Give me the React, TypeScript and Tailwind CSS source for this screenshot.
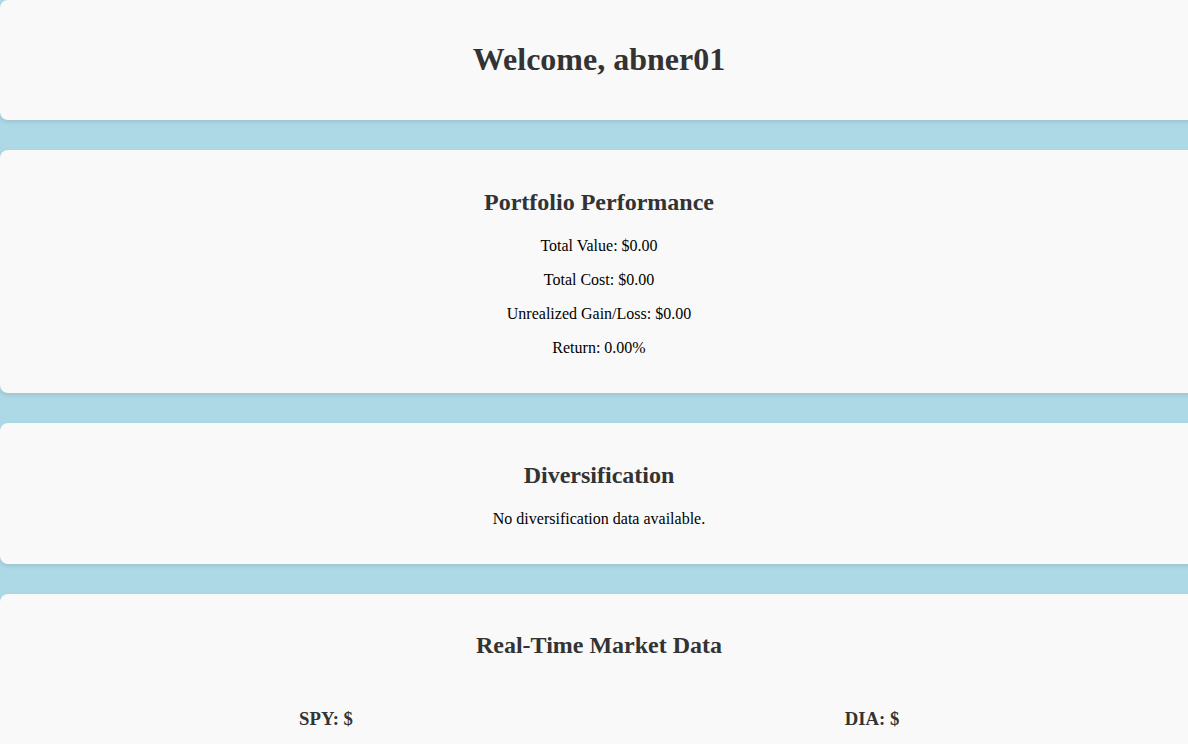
export default function App() {
    return <div className="min-h-screen w-full overflow-hidden bg-[#add8e6] font-['Liberation_Serif',serif] text-black">
        <div className="flex flex-col gap-[30px] w-[1198px]">
            <div className="bg-[#f9f9f9] rounded-[8px] shadow-[0_2px_4px_rgba(0,0,0,0.1)] p-[20px] text-center">
                <h1 className="text-[32px] leading-[37px] font-bold text-[#333] my-[21.44px]">Welcome, abner01</h1>
            </div>
            <div className="bg-[#f9f9f9] rounded-[8px] shadow-[0_2px_4px_rgba(0,0,0,0.1)] p-[20px] text-center">
                <h2 className="text-[24px] leading-[27px] font-bold text-[#333] mt-[18.92px] mb-[20.92px]">Portfolio Performance</h2>
                <p className="text-[16px] leading-[18px] my-[16px]">Total Value: $0.00</p>
                <p className="text-[16px] leading-[18px] my-[16px]">Total Cost: $0.00</p>
                <p className="text-[16px] leading-[18px] my-[16px]">Unrealized Gain/Loss: $0.00</p>
                <p className="text-[16px] leading-[18px] my-[16px]">Return: 0.00%</p>
            </div>
            <div className="bg-[#f9f9f9] rounded-[8px] shadow-[0_2px_4px_rgba(0,0,0,0.1)] p-[20px] text-center">
                <h2 className="text-[24px] leading-[27px] font-bold text-[#333] mt-[18.92px] mb-[20.92px]">Diversification</h2>
                <p className="text-[16px] leading-[18px] my-[16px]">No diversification data available.</p>
            </div>
            <div className="bg-[#f9f9f9] rounded-[8px] shadow-[0_2px_4px_rgba(0,0,0,0.1)] p-[20px] text-center">
                <h2 className="text-[24px] leading-[27px] font-bold text-[#333] mt-[18.92px] mb-[20.92px]">Real-Time Market Data</h2>
                <div className="flex justify-evenly">
                    <div className="w-[480px] pt-[9px]">
                        <h3 className="text-[18.72px] leading-[21.5px] font-bold text-[#333] my-[18.72px]">SPY: $</h3>
                    </div>
                    <div className="w-[480px] pt-[9px]">
                        <h3 className="text-[18.72px] leading-[21.5px] font-bold text-[#333] my-[18.72px]">DIA: $</h3>
                    </div>
                </div>
            </div>
        </div>
    </div>
}
